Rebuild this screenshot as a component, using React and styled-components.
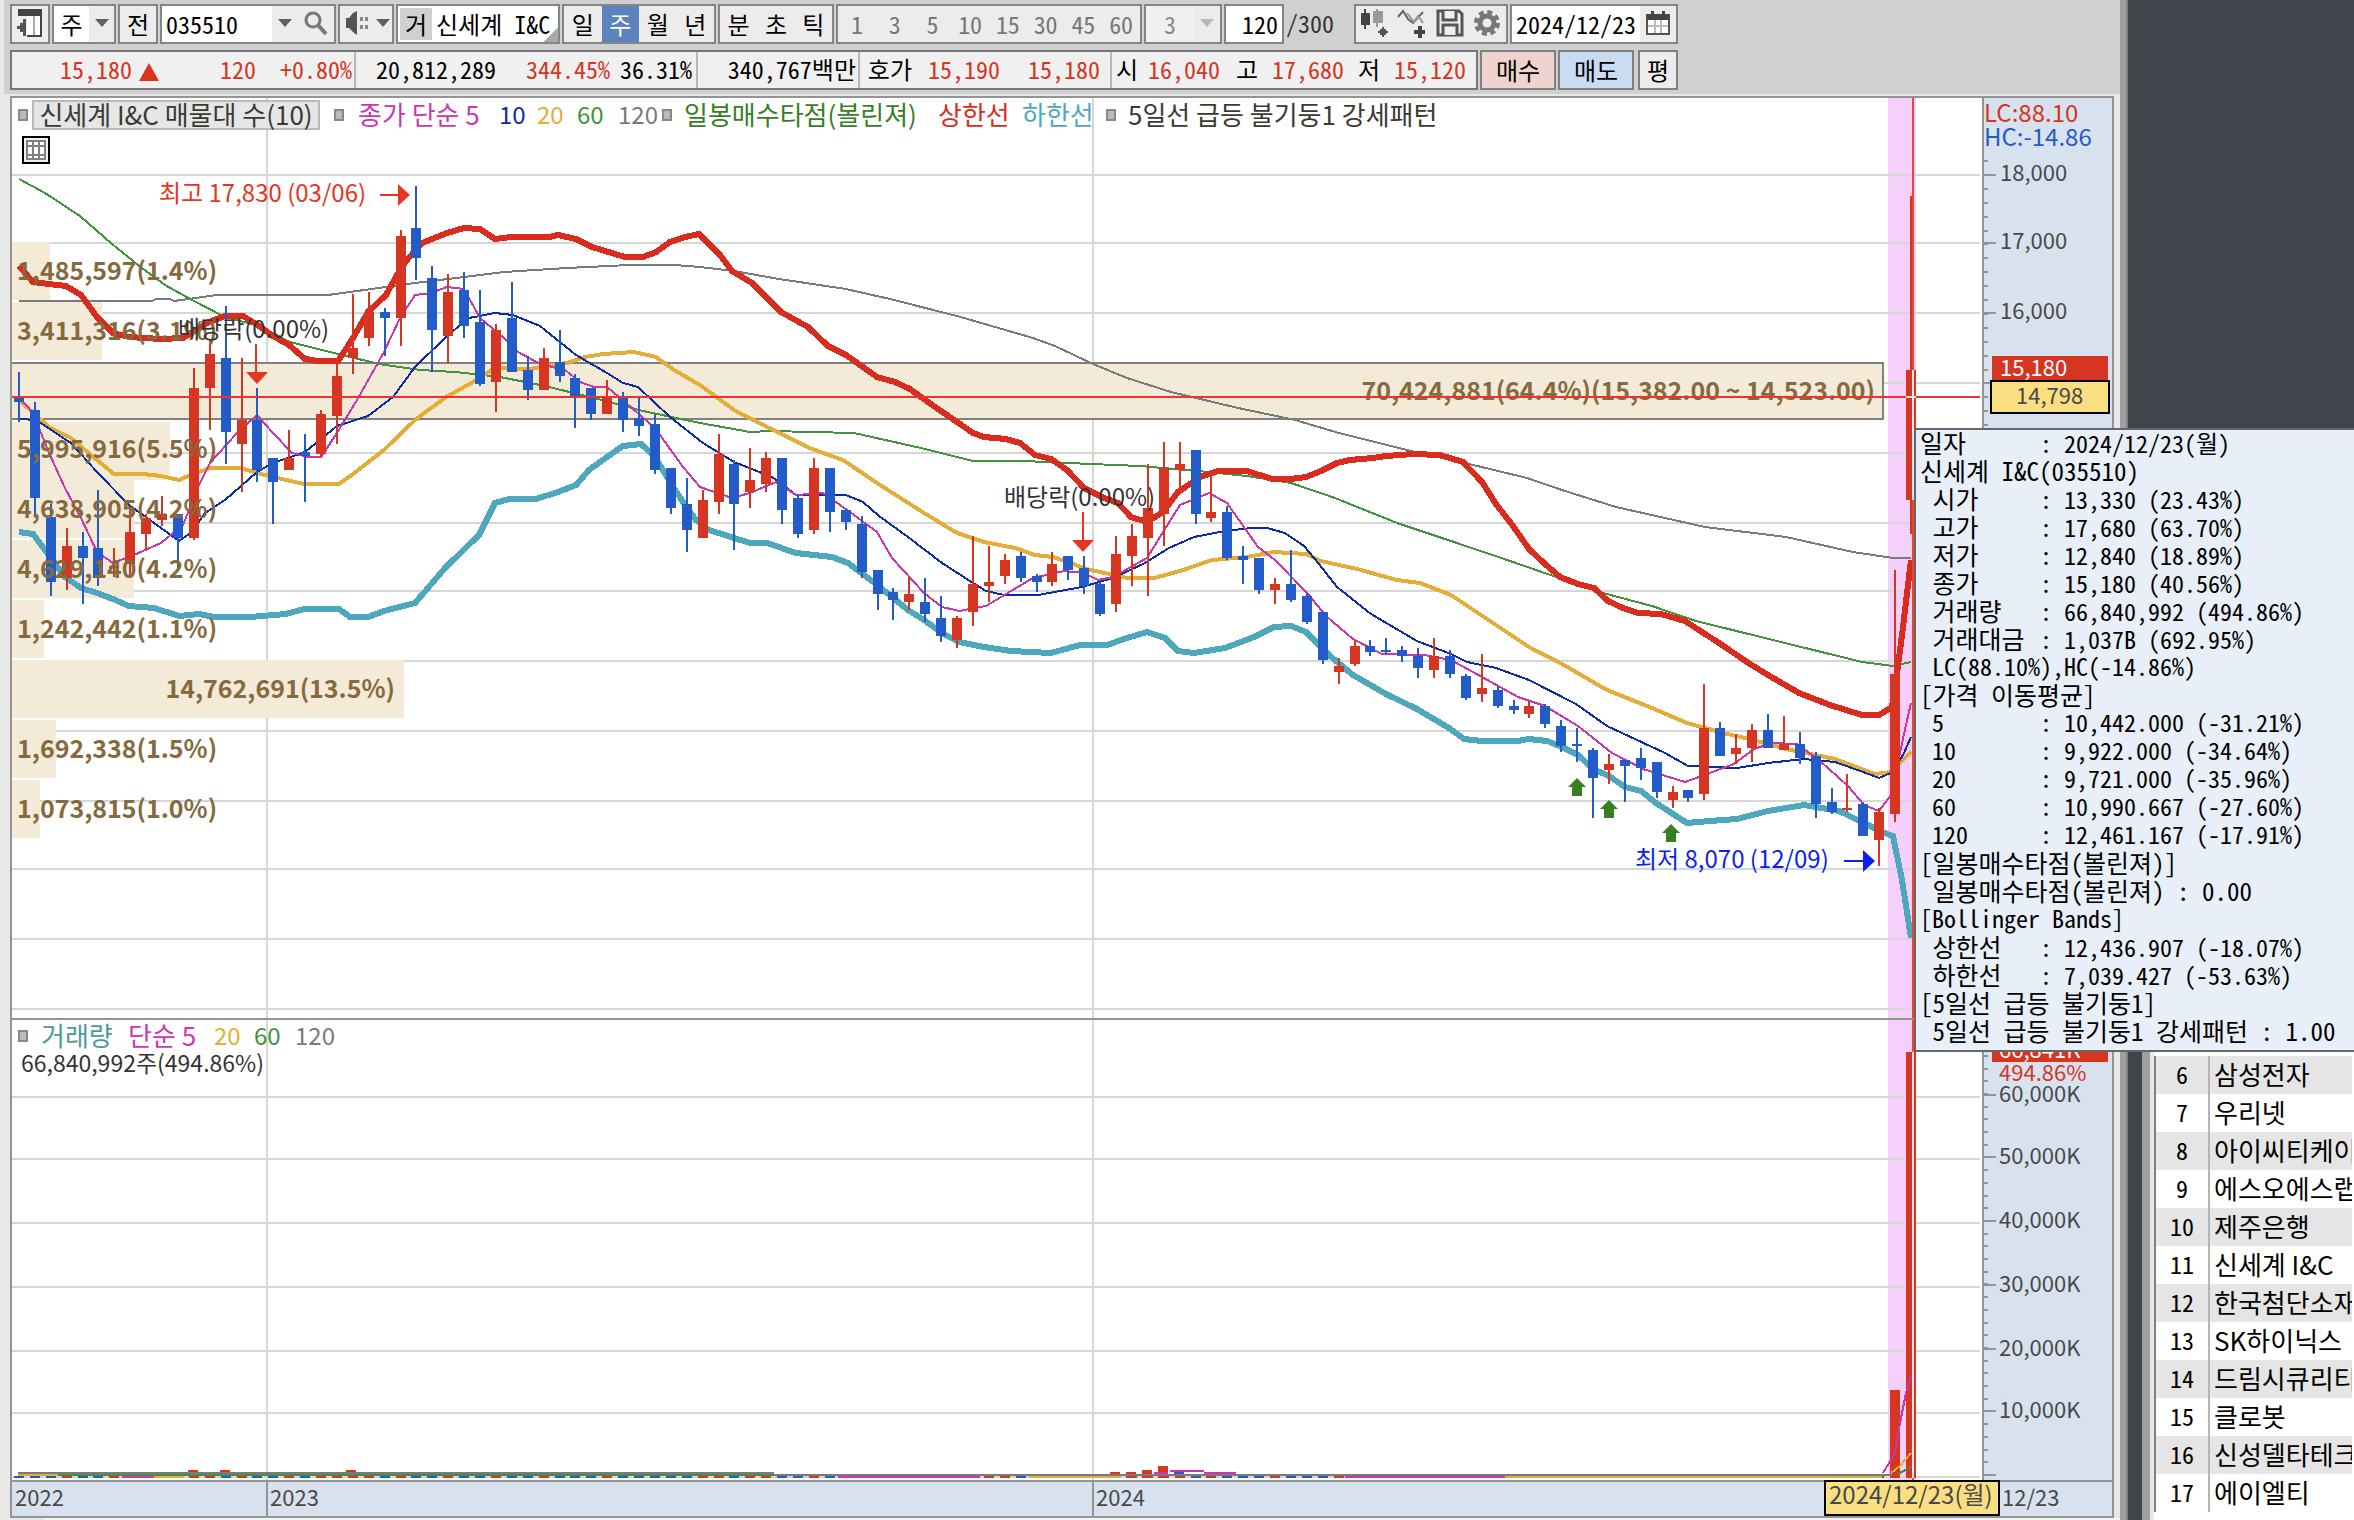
import React, { useState } from 'react';
import styled, { createGlobalStyle } from 'styled-components';

const MONO = '"Noto Sans Mono CJK KR", "Noto Sans CJK KR", monospace';
const PROP = '"Noto Sans CJK KR", sans-serif';

const UP = '#d63522';
const DOWN = '#235cc8';
const LINE = '#949494';
const GRID = '#d6d6d6';

// every candle: [high, open/close top, open/close bottom, low, up]
const candles = [
  [372, 397, 402, 422, 0], [402, 410, 498, 516, 0], [504, 517, 582, 596, 0], [528, 546, 578, 590, 1],
  [532, 546, 558, 604, 0], [490, 548, 578, 586, 0], [548, 566, 568, 577, 1], [508, 532, 564, 577, 1],
  [514, 518, 534, 550, 1], [496, 514, 520, 526, 1], [514, 514, 538, 568, 0], [368, 388, 538, 540, 1],
  [340, 354, 388, 430, 1], [306, 358, 432, 464, 0], [358, 420, 444, 492, 1], [388, 420, 470, 482, 0],
  [458, 458, 482, 524, 0], [430, 458, 470, 470, 1], [434, 452, 456, 502, 0], [410, 414, 454, 456, 1],
  [362, 376, 416, 444, 1], [294, 348, 358, 374, 1], [292, 312, 338, 346, 1], [308, 312, 318, 356, 0],
  [230, 236, 318, 346, 1], [186, 228, 258, 280, 0], [266, 278, 330, 372, 0], [274, 292, 336, 363, 1],
  [272, 290, 326, 338, 0], [290, 322, 384, 386, 0], [324, 330, 382, 412, 1], [282, 318, 372, 372, 0],
  [356, 370, 390, 400, 0], [348, 358, 390, 390, 1], [330, 362, 376, 382, 0], [374, 378, 397, 428, 0],
  [388, 388, 414, 420, 0], [380, 398, 414, 414, 1], [392, 398, 420, 432, 0], [398, 418, 426, 436, 0],
  [414, 424, 470, 474, 0], [468, 468, 508, 514, 0], [478, 504, 530, 552, 0], [490, 500, 538, 538, 1],
  [434, 454, 502, 514, 1], [460, 464, 504, 550, 0], [448, 480, 492, 508, 1], [452, 458, 484, 492, 1],
  [458, 458, 510, 524, 0], [494, 498, 534, 538, 0], [458, 468, 530, 534, 1], [468, 468, 512, 532, 0],
  [508, 510, 522, 530, 0], [516, 524, 572, 578, 0], [570, 570, 594, 610, 0], [588, 592, 600, 620, 0],
  [576, 594, 602, 610, 1], [578, 602, 614, 622, 0], [596, 618, 636, 642, 0], [616, 618, 640, 648, 1],
  [536, 584, 612, 626, 1], [546, 582, 586, 602, 1], [554, 560, 576, 584, 1], [552, 556, 578, 582, 0],
  [574, 576, 582, 592, 0], [552, 564, 582, 586, 1], [556, 556, 570, 580, 0], [556, 568, 586, 594, 0],
  [582, 584, 614, 616, 0], [536, 554, 604, 612, 1], [524, 536, 556, 586, 1], [464, 508, 538, 596, 1],
  [442, 468, 514, 546, 1], [442, 464, 470, 490, 1], [450, 450, 514, 524, 0], [472, 512, 518, 522, 1],
  [506, 512, 558, 560, 0], [546, 556, 560, 584, 0], [558, 558, 590, 594, 0], [578, 584, 590, 604, 1],
  [550, 584, 600, 602, 0], [594, 596, 622, 624, 0], [612, 612, 660, 664, 0], [658, 666, 672, 684, 1],
  [640, 646, 664, 666, 1], [640, 646, 652, 656, 0], [638, 650, 652, 654, 0], [646, 650, 656, 662, 0],
  [648, 656, 668, 678, 0], [638, 656, 670, 678, 1], [650, 656, 674, 678, 0], [674, 676, 698, 700, 0],
  [654, 688, 694, 702, 1], [686, 690, 706, 708, 0], [700, 706, 710, 714, 0], [701, 706, 714, 718, 1],
  [704, 706, 724, 728, 0], [720, 726, 746, 752, 0], [728, 744, 746, 762, 0], [748, 750, 778, 818, 0],
  [754, 764, 770, 784, 1], [760, 760, 766, 802, 0], [748, 758, 768, 780, 0], [762, 762, 792, 798, 0],
  [786, 792, 800, 808, 1], [790, 790, 798, 802, 0], [684, 728, 794, 800, 1], [722, 728, 756, 756, 0],
  [734, 748, 754, 764, 1], [724, 730, 748, 762, 1], [714, 730, 748, 748, 0], [716, 744, 750, 750, 1],
  [732, 744, 758, 764, 0], [752, 756, 804, 818, 0], [788, 802, 812, 814, 0], [774, 808, 810, 812, 1],
  [802, 804, 836, 836, 0], [808, 812, 840, 866, 1], [570, 674, 814, 822, 1], [196, 370, 500, 534, 1],
];

const barX = (i) => Math.round(18.9 + 15.9 * i);

const upperBand = '19,266 33,282 49,284 66,286 81,295 97,317 113,333 129,337 161,339 183,338 209,322 225,316 243,316 259,326 273,336 289,345 305,359 318,361 338,361 353,338 368,312 386,295 397,275 406,261 422,243 447,233 464,228 480,229 495,239 511,237 549,237 558,235 576,239 592,247 625,257 643,257 656,252 670,242 685,237 699,234 720,255 732,271 752,283 781,312 808,327 828,346 846,355 877,377 895,382 910,389 928,402 973,433 984,437 1006,439 1020,443 1035,455 1051,459 1067,470 1084,488 1104,498 1118,503 1131,517 1147,522 1163,512 1178,492 1200,477 1218,471 1247,471 1272,479 1291,479 1306,477 1321,471 1337,463 1350,460 1373,458 1386,456 1413,454 1440,455 1463,462 1482,482 1496,504 1513,526 1529,549 1545,564 1560,577 1578,584 1594,588 1608,601 1623,608 1638,613 1661,614 1685,621 1719,643 1750,664 1768,675 1799,693 1830,705 1862,715 1879,715 1892,707 1897,674 1903,627 1911,560';
const lowerBand = '19,532 33,534 45,550 65,577 81,588 97,593 113,599 129,606 154,608 179,616 199,614 214,617 250,617 286,614 304,609 339,609 350,617 368,617 384,611 415,603 446,567 479,535 495,503 509,499 536,499 558,492 576,485 589,470 607,457 623,446 641,444 655,457 670,482 685,505 696,520 709,530 750,543 767,543 796,553 832,557 848,563 868,578 881,588 908,610 924,620 942,633 959,642 984,647 1011,651 1051,653 1080,645 1107,645 1127,638 1147,632 1165,638 1178,651 1194,653 1225,648 1254,637 1274,627 1291,626 1306,632 1317,643 1330,656 1353,675 1386,694 1417,709 1449,728 1464,739 1482,741 1518,741 1529,739 1547,741 1562,747 1578,755 1593,769 1609,776 1625,787 1641,791 1656,803 1687,823 1710,821 1737,819 1768,811 1804,805 1839,811 1862,822 1882,832 1893,836 1902,880 1911,938';
const ma5 = '19,397 33,413 49,453 65,488 81,518 97,552 113,563 134,555 161,543 183,525 199,485 210,463 237,433 257,415 273,433 292,453 308,457 321,457 337,433 357,400 384,352 400,318 415,295 431,293 447,287 464,289 480,318 504,338 518,352 540,364 565,370 580,382 594,387 607,387 625,402 655,428 683,467 700,487 732,498 750,493 776,482 796,495 823,493 850,512 877,532 892,558 924,593 942,607 959,611 986,606 1006,594 1033,578 1064,571 1084,573 1098,580 1113,577 1147,558 1160,537 1180,505 1209,493 1227,503 1258,547 1275,560 1308,594 1326,616 1353,639 1382,654 1424,655 1451,660 1482,677 1518,697 1545,706 1578,726 1612,753 1643,769 1685,782 1710,773 1734,764 1754,749 1772,743 1797,744 1819,760 1848,786 1864,805 1879,811 1891,795 1904,734 1911,703';
const ma10 = '19,419 36,420 71,443 97,472 129,505 161,528 179,541 192,532 205,513 225,500 257,472 273,463 305,452 337,426 368,416 393,397 415,367 447,336 469,318 495,313 513,315 540,326 576,355 607,373 623,383 638,387 670,417 703,443 734,462 772,477 796,495 846,495 863,502 879,516 908,537 942,563 973,583 986,591 1004,595 1038,595 1082,587 1113,578 1145,563 1169,548 1194,537 1225,531 1252,528 1267,528 1285,533 1304,546 1319,564 1337,587 1371,614 1417,641 1451,654 1467,662 1496,668 1529,680 1576,704 1607,726 1665,753 1688,766 1737,768 1768,763 1804,759 1835,762 1866,773 1879,778 1893,772 1904,753 1911,737';
const ma20 = '19,400 49,427 71,438 97,460 114,474 143,474 161,476 179,480 193,474 210,468 241,468 257,473 286,480 304,484 339,484 353,474 384,450 415,420 446,397 473,382 495,368 518,369 531,369 545,366 567,363 585,357 603,354 634,352 656,357 674,370 700,385 734,410 767,427 812,449 843,460 877,483 924,513 957,533 984,542 1015,548 1035,555 1053,557 1087,569 1109,574 1127,578 1154,578 1180,571 1212,560 1247,557 1274,552 1306,554 1321,561 1357,569 1397,580 1420,583 1451,595 1496,625 1529,647 1562,664 1607,690 1652,708 1687,723 1723,733 1750,739 1786,749 1835,759 1875,774 1891,772 1911,752';
const ma60 = '19,179 45,193 80,216 112,244 138,265 165,285 192,300 225,317 259,326 290,342 330,352 379,364 420,370 455,372 500,377 545,386 594,398 643,411 700,423 750,432 770,431 854,433 921,448 973,461 1024,461 1091,464 1140,466 1198,471 1247,476 1291,483 1335,498 1397,523 1451,541 1513,562 1562,579 1603,593 1652,606 1696,621 1777,641 1862,662 1893,666 1911,662';
const ma120 = '19,301 152,301 156,299 170,299 174,301 217,295 328,295 357,291 415,283 464,277 504,272 567,268 629,265 674,265 700,267 734,271 779,279 846,289 890,299 957,316 1033,338 1055,346 1093,364 1127,378 1171,392 1238,408 1295,420 1339,433 1411,451 1469,464 1527,478 1562,490 1616,507 1705,527 1786,537 1853,552 1893,558 1911,558';

// volume by price, label sits at the left edge unless it has an end
const profile = [
  { y: 242, w: 38, text: '1,485,597(1.4%)' },
  { y: 302, w: 90, text: '3,411,316(3.1%)' },
  { y: 362, w: 1872, text: '70,424,881(64.4%)(15,382.00 ~ 14,523.00)', end: 1875, picked: true },
  { y: 422, w: 158, text: '5,995,916(5.5%)' },
  { y: 480, w: 122, text: '4,638,905(4.2%)' },
  { y: 540, w: 122, text: '4,629,140(4.2%)' },
  { y: 600, w: 32, text: '1,242,442(1.1%)' },
  { y: 660, w: 392, text: '14,762,691(13.5%)', end: 395 },
  { y: 720, w: 44, text: '1,692,338(1.5%)' },
  { y: 780, w: 28, text: '1,073,815(1.0%)' },
];

const priceGrid = [175, 243, 313, 383, 453, 523, 591, 661, 731, 801, 869, 939, 1009];
const volumeGrid = [1097, 1159, 1223, 1287, 1351, 1413, 1477];
const yearX = [267, 1093];

const tooltipRows = [
  ['일자', '2024/12/23(월)'],
  ['신세계 I&C(035510)'],
  [' 시가', '13,330 (23.43%)'],
  [' 고가', '17,680 (63.70%)'],
  [' 저가', '12,840 (18.89%)'],
  [' 종가', '15,180 (40.56%)'],
  [' 거래량', '66,840,992 (494.86%)'],
  [' 거래대금', '1,037B (692.95%)'],
  [' LC(88.10%),HC(-14.86%)'],
  ['[가격 이동평균]'],
  [' 5', '10,442.000 (-31.21%)'],
  [' 10', '9,922.000 (-34.64%)'],
  [' 20', '9,721.000 (-35.96%)'],
  [' 60', '10,990.667 (-27.60%)'],
  [' 120', '12,461.167 (-17.91%)'],
  ['[일봉매수타점(볼린져)]'],
  [' 일봉매수타점(볼린져) : 0.00'],
  ['[Bollinger Bands]'],
  [' 상한선', '12,436.907 (-18.07%)'],
  [' 하한선', '7,039.427 (-53.63%)'],
  ['[5일선 급등 불기둥1]'],
  [' 5일선 급등 불기둥1 강세패턴 : 1.00'],
];

const stocks = [
  [6, '삼성전자'], [7, '우리넷'], [8, '아이씨티케이'], [9, '에스오에스랩'],
  [10, '제주은행'], [11, '신세계 I&C'], [12, '한국첨단소재'], [13, 'SK하이닉스'],
  [14, '드림시큐리티'], [15, '클로봇'], [16, '신성델타테크'], [17, '에이엘티'],
];

const GlobalStyle = createGlobalStyle`
  * { box-sizing: border-box; }
  body {
    margin: 0;
    background: #42444c;
    overflow: hidden;
    font-family: ${MONO};
    font-size: 24px;
    color: #000;
  }
  button, input, select { font: inherit; color: inherit; }
`;

const Page = styled.div`
  position: relative;
  display: grid;
  grid-template-columns: minmax(0, 1fr) 226px;
  height: 100vh;
  overflow: hidden;
`;

const ChartWindow = styled.main`
  display: flex;
  flex-direction: column;
  background: #e8e8e8;
  border-right: 2px solid #808080;
  box-shadow: inset -6px 0 0 #a0a0a0;
  padding-right: 6px;
`;

const Bars = styled.header`
  display: flex;
  flex-direction: column;
  gap: 6px;
  margin-left: 4px;
  padding: 4px 6px;
  background: #d0d0d0;
`;

const Bar = styled.div`
  display: flex;
  gap: 2px;
  height: 40px;
`;

const Group = styled.div`
  display: flex;
  flex: none;
  width: ${(p) => p.$w}px;
  border: 2px solid #858585;
  background: ${(p) => p.$bg || '#fff'};
  color: ${(p) => p.$color || '#000'};
  > * + * { border-left: 2px solid #858585; }
`;

const Cell = styled.button`
  display: flex;
  flex: 1 1 0;
  align-items: center;
  justify-content: center;
  min-width: 0;
  height: 34px;
  padding: 0 0 2px;
  border: 0;
  box-sizing: content-box;
  white-space: nowrap;
  background: ${(p) => (p.$on ? '#5b84be' : '#ececec')};
  color: ${(p) => (p.$on ? '#fff' : 'inherit')};
`;

const FixedCell = styled(Cell)`
  flex: 0 0 ${(p) => p.$w}px;
`;

const Field = styled.input`
  flex: 1 1 0;
  min-width: 0;
  height: 36px;
  padding: 0 4px 2px;
  border: 0;
  background: #fff;
  text-align: ${(p) => p.$align || 'left'};
`;

const Pick = styled.select`
  flex: 1 1 0;
  min-width: 0;
  height: 36px;
  padding: 0 0 2px;
  border: 0;
  border-radius: 0;
  appearance: none;
  background: ${(p) => (p.disabled ? '#f0f0f0' : '#fff')};
  text-align: center;
  text-align-last: center;
  opacity: 1;
  color: inherit;
`;

const NameBox = styled.div`
  display: flex;
  flex: none;
  align-items: center;
  gap: 4px;
  width: 164px;
  padding: 2px;
  border: 2px solid #858585;
  background: linear-gradient(135deg, transparent 0 calc(100% - 10px), #aaa 0) right bottom / 16px 14px no-repeat #fff;
  line-height: 32px;
  white-space: nowrap;
  overflow: hidden;
  b { flex: none; width: 32px; text-align: center; font-weight: 400; background: #d0d0d0; }
`;

const Total = styled.span`
  width: 66px;
  line-height: 38px;
  color: #333;
`;

const Quotes = styled.div`
  display: flex;
  flex: none;
  width: 1468px;
  border: 2px solid #777;
  background: #f0f0f0;
  line-height: 34px;
`;

const QuoteSet = styled.div`
  display: flex;
  padding-right: ${(p) => p.$end || 0}px;
  border-right: ${(p) => (p.$last ? 0 : 2)}px solid #b8b8b8;
`;

const Val = styled.span`
  width: ${(p) => p.$w}px;
  text-align: right;
  white-space: nowrap;
  color: ${(p) => (p.$up ? UP : '#000')};
  svg { vertical-align: middle; }
`;

const OrderButton = styled.button`
  width: ${(p) => p.$w || 76}px;
  padding: 0 0 2px;
  margin-left: ${(p) => p.$gap || 0}px;
  border: 2px solid #808080;
  background: ${(p) => p.$bg || '#ececec'};
`;

const ChartFrame = styled.section`
  display: grid;
  grid-template-columns: minmax(0, 1fr) 130px;
  margin: 2px 6px 0 10px;
  border: 2px solid ${LINE};
  font-family: ${PROP};
`;

const Pane = styled.div`
  position: relative;
  background: #fff;
  border-top: ${(p) => (p.$top ? 2 : 0)}px solid ${LINE};
`;

const AxisPane = styled(Pane)`
  background: #d8e2ee;
  border-left: 2px solid ${LINE};
`;

const DateAxis = styled.div`
  grid-column: 1 / -1;
  border-top: 2px solid ${LINE};
  background: #d8e2ee;
`;

const Plot = styled.svg`
  display: block;
  width: 100%;
  height: ${(p) => p.$h}px;
  overflow: ${(p) => (p.$spill ? 'visible' : 'hidden')};
  font-size: 24px;
  .axis { font-size: 22px; fill: #484848; }
  .profile { font-size: 25px; font-weight: 700; fill: #86693c; }
`;

const Legend = styled.div`
  position: absolute;
  left: 6px;
  top: ${(p) => p.$top}px;
  display: flex;
  align-items: center;
  font-size: 26px;
  line-height: 26px;
  white-space: nowrap;
`;

const Bullet = styled.i`
  width: 10px;
  height: 12px;
  margin-right: ${(p) => p.$after}px;
  border: 2px solid #888;
  background: #bbb;
`;

const Item = styled.span`
  width: ${(p) => p.$w}px;
  padding-bottom: 2px;
  color: ${(p) => p.$c};
`;

const Term = styled(Item)`
  font-size: 24px;
`;

const Chip = styled.button`
  width: 288px;
  height: 30px;
  margin-right: 14px;
  padding: 0 0 2px;
  border: 2px solid #bbb;
  background: #e6e6e6;
  color: #3a3a34;
  font-size: 26px;
  line-height: 24px;
`;

const VolumeNow = styled.p`
  position: absolute;
  left: 9px;
  top: 28px;
  margin: 0;
  font-size: 23px;
  line-height: 28px;
  color: #333;
`;

const GridButton = styled.button`
  position: absolute;
  left: 10px;
  top: 38px;
  width: 28px;
  height: 28px;
  padding: 0;
  border: 2px solid #000;
  background: #eee;
  svg { display: block; }
`;

const Footer = styled.div`
  height: 2px;
  margin-left: 44px;
  background: #f4f4f4;
`;

const Tooltip = styled.aside`
  position: absolute;
  top: 428px;
  right: 0;
  width: 440px;
  height: 624px;
  padding: 0 0 0 4px;
  border: 2px solid #666;
  border-right: 0;
  background: #e8eff8;
  line-height: 24px;
  white-space: pre;
`;

const TipRow = styled.div`
  display: flex;
  align-items: baseline;
  height: 28px;
`;

const TipLabel = styled.span`
  min-width: 120px;
  font-size: ${(p) => (p.$hangul ? 25 : 24)}px;
`;

const Side = styled.aside`
  display: flex;
  flex-direction: column;
  justify-content: flex-end;
  padding-left: 14px;
  overflow: hidden;
`;

const StockWindow = styled.div`
  flex: 0 0 502px;
  overflow: hidden;
  padding: 38px 0 0 4px;
  border-left: 8px solid #a0a0a0;
  background: linear-gradient(90deg, #e8e8e8 0 4px, #fff 0);
`;

const StockTable = styled.table`
  width: 100%;
  border-collapse: collapse;
  table-layout: fixed;
  border-left: 2px solid #808080;
  td { height: 38px; padding: 0 0 2px; line-height: 34px; white-space: nowrap; overflow: hidden; }
  td:first-child { width: 54px; text-align: center; border-right: 2px solid #b4b4b4; }
  td:last-child { padding-left: 4px; font: 26px/34px ${PROP}; }
  tr:nth-child(odd) td { background: #e5e5e5; }
  tr:nth-child(even) td { background: #fff; }
`;

const Arrow = ({ color = '#606060' }) => (
  <svg width="16" height="10"><path d="M1 1H15L8 9Z" fill={color} /></svg>
);

const PanelIcon = () => (
  <svg width="26" height="28" viewBox="0 0 26 28">
    <path d="M2 7V1H24V27H10" fill="none" stroke="#444" strokeWidth="2" />
    <path d="M2 1H24V7H2Z" fill="#444" />
    <path d="M10 7H23V26H10Z" fill="#fff" />
    <path d="M17 7V26" stroke="#aaa" strokeWidth="2" />
    <path d="M9 10V27H6V23H3V20H0V17H3V14H6V10Z" fill="#555" />
  </svg>
);

const SearchIcon = () => (
  <svg width="26" height="26" viewBox="0 0 26 26" fill="none">
    <circle cx="10" cy="10" r="7" stroke="#777" strokeWidth="3" />
    <path d="M15 15L23 24" stroke="#777" strokeWidth="4" />
  </svg>
);

const SpeakerIcon = () => (
  <svg width="24" height="26" viewBox="0 0 24 26" fill="#555">
    <path d="M1 8H4L8 3L12 1V25L8 22L4 18H1Z" />
    <path d="M15 7H18V11H15ZM20 7H23V11H20ZM15 15H18V19H15ZM20 15H23V19H20Z" fill="#888" />
  </svg>
);

const CandleIcon = () => (
  <svg width="30" height="30" viewBox="0 0 30 30">
    <path d="M1 5H4V1H6V5H10V17H6V21H4V17H1Z" fill="#444" />
    <path d="M13 3H16V1H18V3H23V15H18V19H16V15H13Z" fill="#999" />
    <path d="M18 23H22V19H24V23H28V25H24V29H22V25H18ZM20 21H26V27H20Z" fill="#555" />
  </svg>
);

const WaveIcon = () => (
  <svg width="30" height="30" viewBox="0 0 30 30">
    <path d="M1 9L6 3L11 11L16 15L26 4" fill="none" stroke="#666" strokeWidth="2" />
    <path d="M10 5L17 14L21 8L26 15" fill="none" stroke="#999" strokeWidth="2" />
    <path d="M17 22H21V18H25V22H28V26H25V30H21V26H17Z" fill="#444" />
  </svg>
);

const SaveIcon = () => (
  <svg width="28" height="28" viewBox="0 0 28 28" fill="#eee" stroke="#555" strokeWidth="3">
    <path d="M2 2H23L26 5V26H2Z" />
    <path d="M7 2V11H20V2M7 26V16H21V26" />
  </svg>
);

const GearIcon = () => (
  <svg width="28" height="28" viewBox="0 0 28 28" fill="none" stroke="#777">
    <circle cx="14" cy="14" r="7" strokeWidth="5" />
    <circle cx="14" cy="14" r="11" strokeWidth="4" strokeDasharray="5 3.64" />
  </svg>
);

const CalendarIcon = () => (
  <svg width="24" height="24" viewBox="0 0 24 24">
    <path d="M1 4H23V23H1Z" fill="#fff" stroke="#555" strokeWidth="2" />
    <path d="M1 3H23V9H1ZM5 0H8V4H5ZM16 0H19V4H16Z" fill="#444" />
    <path d="M9 9V22M15 9V22M2 15H22" stroke="#bbb" strokeWidth="2" />
  </svg>
);

const MaLine = ({ points, color, w = 2 }) => (
  <polyline points={points} fill="none" stroke={color} strokeWidth={w} strokeLinejoin="round" shapeRendering="crispEdges" />
);

const PriceChart = () => (
  <Plot $h={920} viewBox="12 98 1970 920">
    <g shapeRendering="crispEdges">
      <rect x="1888" y="98" width="28" height="920" fill="#f5d0fb" />
      {priceGrid.map((y) => <rect key={y} x="12" y={y - 1} width="1968" height="2" fill={GRID} />)}
      {yearX.map((x) => <rect key={x} x={x - 1} y="98" width="2" height="920" fill={GRID} />)}
      {profile.map((b) => (
        <rect
          key={b.y}
          x={b.picked ? 11 : 12}
          y={b.picked ? 363 : b.y}
          width={b.w}
          height={b.picked ? 56 : 58}
          fill="#f3ead8"
          stroke={b.picked ? '#808080' : 'none'}
          strokeWidth="2"
        />
      ))}
    </g>
    <MaLine points={ma120} color="#7a7a7a" />
    <MaLine points={ma60} color="#429240" />
    <MaLine points={lowerBand} color="#4da8bd" w={6} />
    <MaLine points={ma20} color="#e6ac38" w={4} />
    <MaLine points={ma10} color="#0b2ba5" />
    <MaLine points={ma5} color="#cb36b0" />
    <MaLine points={upperBand} color="#d92c1e" w={6} />
    <g shapeRendering="crispEdges">
      {candles.map(([h, t, b, l, up], i) => (
        <g key={i} fill={up ? UP : DOWN}>
          <rect x={barX(i) - 1} y={h} width="2" height={l - h} />
          <rect x={barX(i) - 5} y={t} width="10" height={Math.max(b - t, 2)} />
        </g>
      ))}
    </g>
    <g className="profile">
      {profile.map((b, i) => (
        <text key={b.y} x={b.end || 17} y={280 + i * 60 - (i > 2 ? 2 : 0)} textAnchor={b.end ? 'end' : 'start'}>{b.text}</text>
      ))}
    </g>
    <g fill="#e93423">
      <text x="159" y="202">최고 17,830 (03/06)</text>
      <path d="M380 194H398V184L410 195L398 206V196H380Z" />
      <path d="M255 344H257V372H268L257 384L246 372H255Z" />
      <path d="M1082 512H1084V540H1094L1083 552L1072 540H1082Z" />
    </g>
    <g fill="#333">
      <text x="178" y="338">배당락(0.00%)</text>
      <text x="1004" y="506">배당락(0.00%)</text>
    </g>
    <g fill="#0a1ff5">
      <text x="1635" y="868">최저 8,070 (12/09)</text>
      <path d="M1844 860H1863V850L1875 861L1863 872V862H1844Z" />
    </g>
    {[[1577, 778], [1609, 800], [1671, 824]].map(([x, y]) => (
      <path key={x} d={`M${x} ${y}l9 9h-4v9h-10v-9h-4z`} fill="#36801f" />
    ))}
    <g shapeRendering="crispEdges">
      <rect x="12" y="396" width="1968" height="2" fill="#e93430" />
      <rect x="1912" y="98" width="2" height="920" fill="#e8482c" />
      <rect x="1912" y="370" width="2" height="130" fill="#f0e8ee" />
      <rect x="1906" y="396" width="10" height="2" fill="#f0e8ee" />
    </g>
  </Plot>
);

const priceTicks = Array.from({ length: 62 }, (_, i) => 161 + Math.round(i * 13.9));
const volumeTicks = Array.from({ length: 36 }, (_, i) => 1477 - Math.round(i * 12.7));

const PriceAxis = () => (
  <Plot $h={920} $spill viewBox="1984 98 128 920">
    <g fill={LINE} shapeRendering="crispEdges">
      {priceTicks.map((y) => <rect key={y} x="1984" y={y - 1} width="4" height="2" />)}
      {priceGrid.map((y) => <rect key={y} x="1984" y={y - 1} width="12" height="2" />)}
    </g>
    <text x="1984" y="122" fill={UP}>LC:88.10</text>
    <text x="1984" y="146" fill={DOWN}>HC:-14.86</text>
    <g className="axis">
      <text x="2000" y="181">18,000</text>
      <text x="2000" y="249">17,000</text>
      <text x="2000" y="319">16,000</text>
    </g>
    <rect x="1992" y="356" width="116" height="24" fill={UP} />
    <g className="axis"><text x="2000" y="376" style={{ fill: '#fff' }}>15,180</text></g>
    <rect x="1991" y="381" width="118" height="32" fill="#fadf82" stroke="#000" strokeWidth="2" />
    <g className="axis"><text x="2016" y="404">14,798</text></g>
  </Plot>
);

const VolumeChart = () => (
  <Plot $h={460} viewBox="12 1020 1970 460">
    <g shapeRendering="crispEdges">
      <rect x="1888" y="1020" width="28" height="460" fill="#f5d0fb" />
      {volumeGrid.map((y) => <rect key={y} x="12" y={y - 1} width="1968" height="2" fill={GRID} />)}
      {yearX.map((x) => <rect key={x} x={x - 1} y="1020" width="2" height="460" fill={GRID} />)}
      {candles.map((c, i) => (
        <rect key={i} x={barX(i) - 5} y="1476" width="10" height="2" fill={c[4] ? UP : DOWN} />
      ))}
      <path d="M188 1470h10v4h-10zM220 1470h10v4h-10zM346 1470h10v4h-10zM1110 1472h10v6h-10zM1126 1472h10v6h-10zM1142 1470h10v8h-10zM1158 1466h10v12h-10zM1890 1390h10v88h-10zM1906 1052h10v426h-10z" fill={UP} />
      <rect x="1174" y="1472" width="10" height="4" fill={DOWN} />
      <path d="M122 1476h32v2h-32zM838 1476h142v2h-142zM1345 1476h160v2h-160zM1154 1472h14v2h-14zM1170 1470h34v2h-34zM1204 1472h32v2h-32z" fill="#cb36b0" />
      <path d="M18 1474h40v2h-40zM154 1476h30v2h-30zM1029 1476h92v2h-92zM1505 1476h377v2h-377z" fill="#e6ac38" />
      <rect x="58" y="1474" width="716" height="2" fill="#429240" />
      <path d="M18 1472h756v2h-756zM774 1474h1118v2h-1118z" fill="#7a7a7a" />
      <rect x="1912" y="1020" width="2" height="460" fill="#e8482c" />
      <rect x="1912" y="1052" width="2" height="426" fill="#f0e8ee" />
    </g>
    <MaLine points="1883,1473 1895,1453 1900,1423 1906,1393 1911,1377" color="#cb36b0" />
    <MaLine points="1891,1473 1900,1466 1911,1453" color="#e6ac38" />
    <MaLine points="1898,1474 1911,1467" color="#429240" />
  </Plot>
);

const VolumeAxis = () => (
  <Plot $h={460} viewBox="1984 1020 128 460">
    <g fill={LINE} shapeRendering="crispEdges">
      {volumeTicks.map((y) => <rect key={y} x="1984" y={y - 1} width="4" height="2" />)}
      {volumeGrid.map((y) => <rect key={y} x="1984" y={y - 1} width="12" height="2" />)}
    </g>
    <g className="axis">
      {volumeGrid.slice(0, 6).map((y, i) => <text key={y} x="1999" y={y + 7}>{60 - i * 10},000K</text>)}
    </g>
    <rect x="1998" y="1064" width="112" height="24" fill="#d8e2ee" />
    <rect x="1992" y="1040" width="116" height="24" fill={UP} />
    <g className="axis">
      <text x="1999" y="1060" style={{ fill: '#fff' }}>66,841K</text>
      <text x="1999" y="1083" style={{ fill: UP }}>494.86%</text>
    </g>
  </Plot>
);

const Dates = () => (
  <Plot $h={34} $spill viewBox="12 1482 2100 34">
    {yearX.map((x) => <rect key={x} x={x - 1} y="1482" width="2" height="34" fill={LINE} />)}
    <g className="axis">
      <text x="15" y="1506">2022</text>
      <text x="270" y="1506">2023</text>
      <text x="1096" y="1506">2024</text>
      <text x="2002" y="1506">12/23</text>
    </g>
    <rect x="1825" y="1481" width="174" height="34" fill="#fadf82" stroke="#000" strokeWidth="2" />
    <text x="1829" y="1504" fill="#484848">2024/12/23(월)</text>
  </Plot>
);

const App = () => {
  const [period, setPeriod] = useState('주');

  return (
    <Page>
      <GlobalStyle />
      <ChartWindow>
        <Bars>
          <Bar>
            <Group $w={40}><Cell aria-label="패널"><PanelIcon /></Cell></Group>
            <Group $w={64}>
              <Pick aria-label="차트 구분"><option>주</option></Pick>
              <FixedCell $w={25} aria-label="구분 열기"><Arrow /></FixedCell>
            </Group>
            <Group $w={40}><Cell>전</Cell></Group>
            <Group $w={176}>
              <Field aria-label="종목코드" defaultValue="035510" />
              <FixedCell $w={26} aria-label="최근 종목"><Arrow /></FixedCell>
              <FixedCell $w={36} aria-label="종목 검색"><SearchIcon /></FixedCell>
            </Group>
            <Group $w={56}>
              <Cell aria-label="소리"><SpeakerIcon /></Cell>
              <FixedCell $w={18} aria-label="소리 설정"><Arrow /></FixedCell>
            </Group>
            <NameBox><b>거</b>신세계 I&amp;C</NameBox>
            <Group $w={154}>
              {['일', '주', '월', '년'].map((t) => (
                <Cell key={t} $on={t === period} onClick={() => setPeriod(t)}>{t}</Cell>
              ))}
            </Group>
            <Group $w={116}>
              {['분', '초', '틱'].map((t) => (
                <Cell key={t} $on={t === period} onClick={() => setPeriod(t)}>{t}</Cell>
              ))}
            </Group>
            <Group $w={306} $color="#777">
              {[1, 3, 5, 10, 15, 30, 45, 60].map((m) => <Cell key={m}>{m}</Cell>)}
            </Group>
            <Group $w={78} $color="#888">
              <Pick aria-label="분 간격" disabled><option>3</option></Pick>
              <FixedCell $w={26} aria-label="간격 열기" disabled><Arrow color="#b8b8b8" /></FixedCell>
            </Group>
            <Group $w={60}><Field aria-label="봉 개수" $align="right" defaultValue="120" /></Group>
            <Total>/300</Total>
            <Group $w={154}>
              <Cell aria-label="봉 차트"><CandleIcon /></Cell>
              <Cell aria-label="지표"><WaveIcon /></Cell>
              <Cell aria-label="저장"><SaveIcon /></Cell>
              <Cell aria-label="설정"><GearIcon /></Cell>
            </Group>
            <Group $w={168}>
              <Field aria-label="조회일" defaultValue="2024/12/23" />
              <FixedCell $w={36} aria-label="달력"><CalendarIcon /></FixedCell>
            </Group>
          </Bar>
          <Bar>
            <Quotes>
              <QuoteSet $end={2}>
                <Val $w={120} $up>15,180</Val>
                <Val $w={28} $up><svg width="22" height="20"><path d="M1 19L11 1L21 19Z" fill={UP} /></svg></Val>
                <Val $w={96} $up>120</Val>
                <Val $w={96} $up>+0.80%</Val>
              </QuoteSet>
              <QuoteSet $end={4}>
                <Val $w={140}>20,812,289</Val>
                <Val $w={114} $up>344.45%</Val>
                <Val $w={82}>36.31%</Val>
              </QuoteSet>
              <QuoteSet $end={2}><Val $w={158}>340,767백만</Val></QuoteSet>
              <QuoteSet $end={10}>
                <Val $w={52}>호가</Val>
                <Val $w={88} $up>15,190</Val>
                <Val $w={100} $up>15,180</Val>
              </QuoteSet>
              <QuoteSet $last>
                <Val $w={26}>시</Val>
                <Val $w={82} $up>16,040</Val>
                <Val $w={38}>고</Val>
                <Val $w={86} $up>17,680</Val>
                <Val $w={36}>저</Val>
                <Val $w={86} $up>15,120</Val>
              </QuoteSet>
            </Quotes>
            <OrderButton $bg="#f0d2ce">매수</OrderButton>
            <OrderButton $bg="#cadcf2">매도</OrderButton>
            <OrderButton $w={40} $gap={2}>평</OrderButton>
          </Bar>
        </Bars>
        <ChartFrame>
          <Pane>
            <PriceChart />
            <Legend $top={2}>
              <Bullet $after={4} />
              <Chip>신세계 I&amp;C 매물대 수(10)</Chip>
              <Bullet $after={14} />
              <Item $w={141} $c="#cb36b0">종가 단순 5</Item>
              <Term $w={38} $c="#0b2ba5">10</Term>
              <Term $w={40} $c="#e6ac38">20</Term>
              <Term $w={41} $c="#429240">60</Term>
              <Term $w={44} $c="#7a7a7a">120</Term>
              <Bullet $after={12} />
              <Item $w={254} $c="#36801f">일봉매수타점(볼린져)</Item>
              <Item $w={84} $c="#d92c1e">상한선</Item>
              <Item $w={84} $c="#4da8bd">하한선</Item>
              <Bullet $after={12} />
              <Item $c="#3a3a34">5일선 급등 불기둥1 강세패턴</Item>
            </Legend>
            <GridButton aria-label="표 보기">
              <svg width="24" height="24" viewBox="0 0 24 24" fill="#fff" stroke="#808080" strokeWidth="2">
                <path d="M3 3H21V21H3ZM3 8H21M3 17H21M9 3V21M15 3V21" />
              </svg>
            </GridButton>
          </Pane>
          <AxisPane><PriceAxis /></AxisPane>
          <Pane $top>
            <VolumeChart />
            <Legend $top={2}>
              <Bullet $after={13} />
              <Item $w={87} $c="#4c9a9c">거래량</Item>
              <Item $w={86} $c="#cb36b0">단순 5</Item>
              <Term $w={40} $c="#e6ac38">20</Term>
              <Term $w={41} $c="#429240">60</Term>
              <Term $c="#7a7a7a">120</Term>
            </Legend>
            <VolumeNow>66,840,992주(494.86%)</VolumeNow>
          </Pane>
          <AxisPane><VolumeAxis /></AxisPane>
          <DateAxis><Dates /></DateAxis>
        </ChartFrame>
        <Footer />
      </ChartWindow>
      <Side>
        <StockWindow>
          <StockTable>
            <tbody>
              {stocks.map(([no, name]) => (
                <tr key={no}><td>{no}</td><td>{name}</td></tr>
              ))}
            </tbody>
          </StockTable>
        </StockWindow>
      </Side>
      <Tooltip>
        {tooltipRows.map(([label, value]) => (
          <TipRow key={label}>
            <TipLabel $hangul={/[가-힣]/.test(label)}>{label}</TipLabel>
            {value && <span>{': ' + value}</span>}
          </TipRow>
        ))}
      </Tooltip>
    </Page>
  );
};

export default App;
